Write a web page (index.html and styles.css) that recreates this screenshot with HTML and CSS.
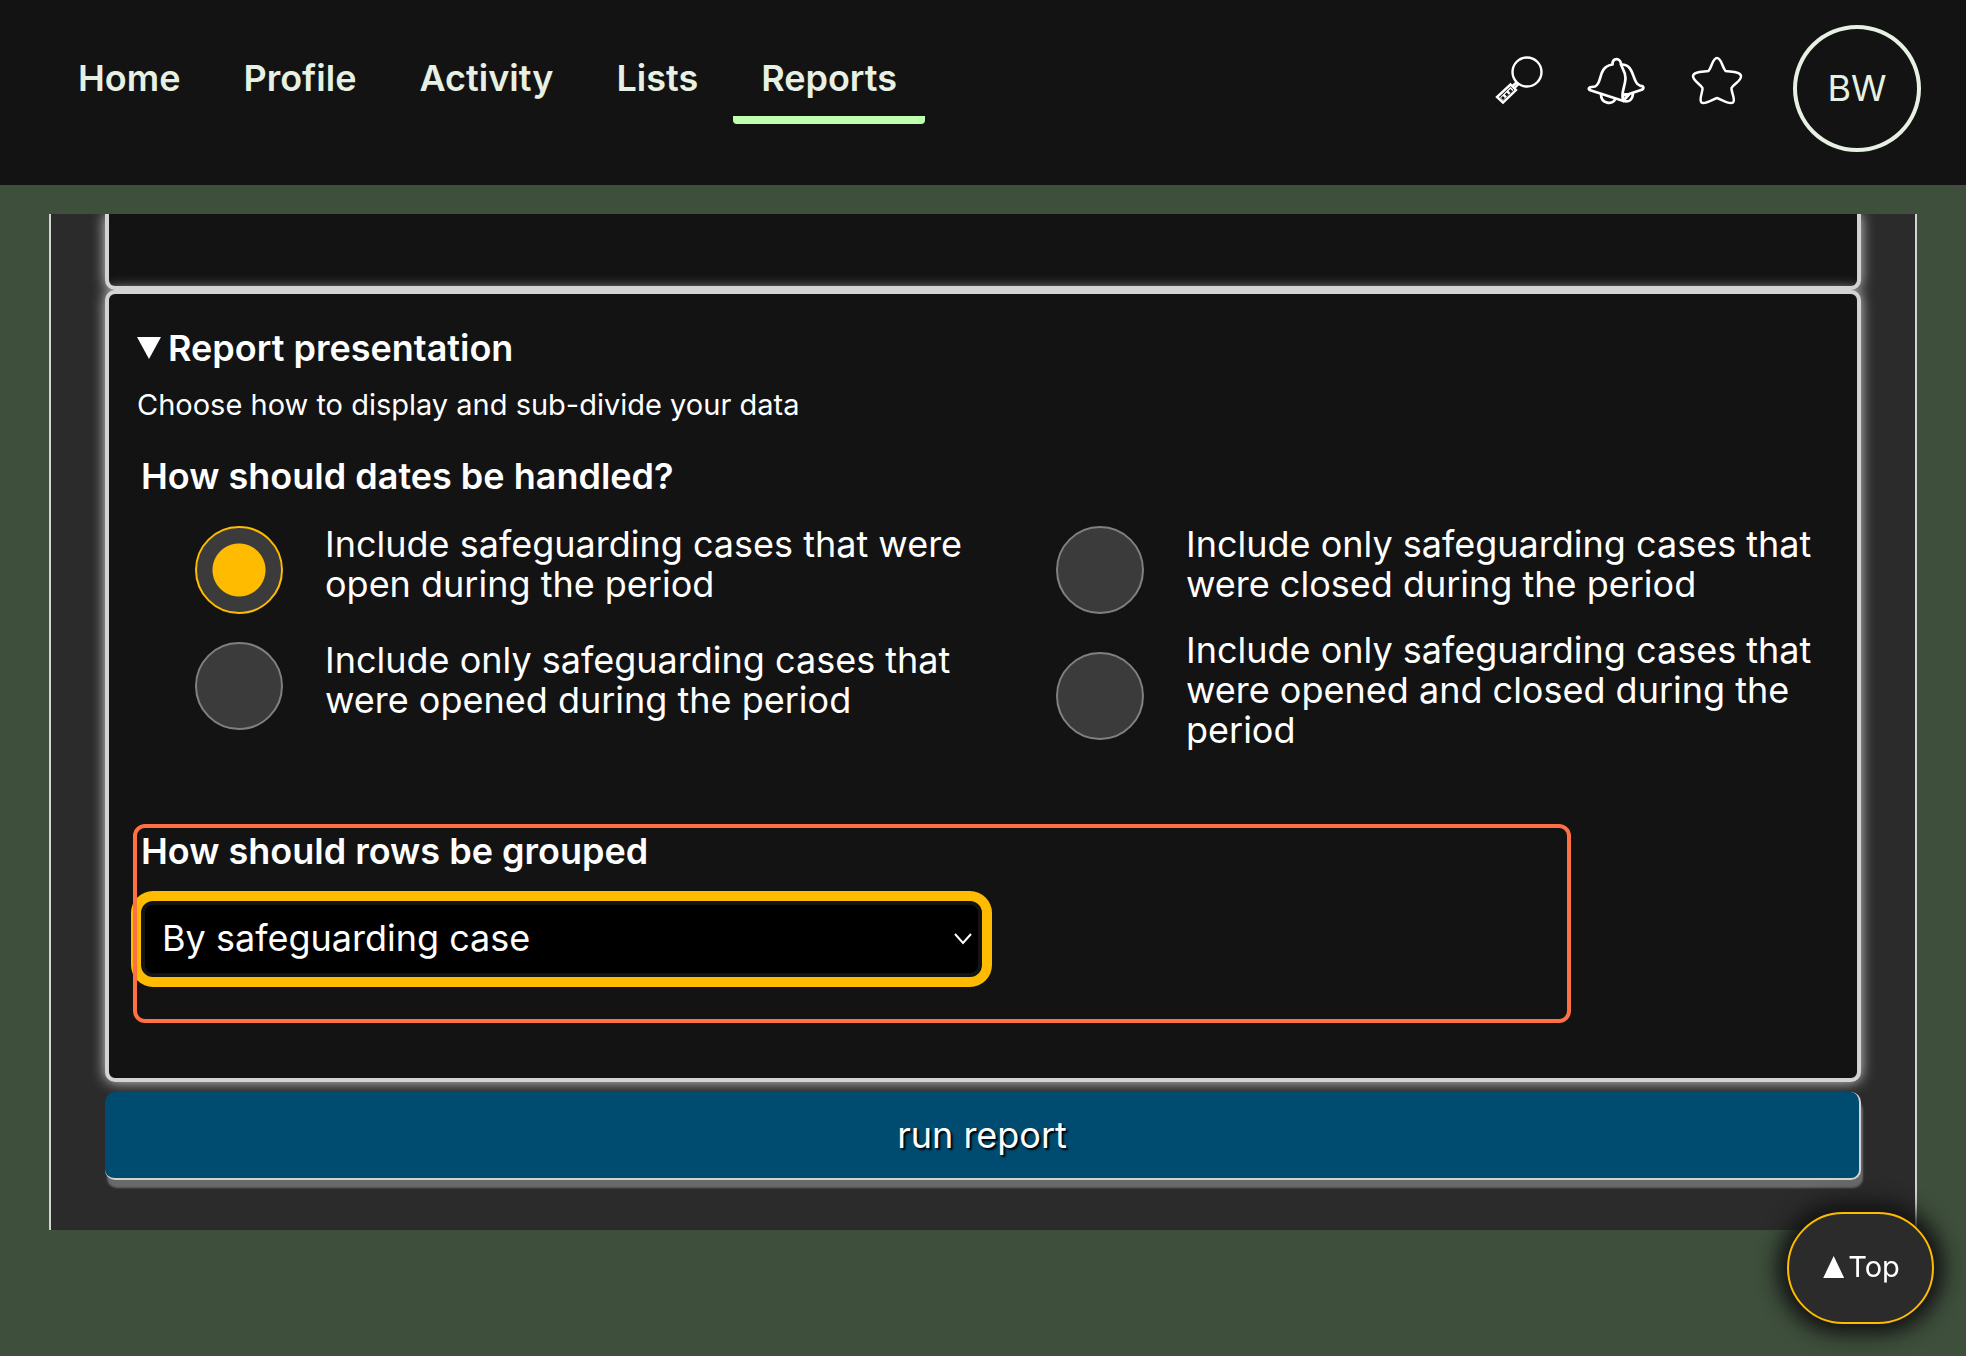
FILE: index.html
```html
<!DOCTYPE html>
<html lang="en">
<head>
<meta charset="utf-8">
<meta name="viewport" content="width=device-width, initial-scale=1">
<title>Reports</title>
<link rel="stylesheet" href="styles.css">
</head>
<body>
<header class="site-header">
  <nav class="main-nav" aria-label="Main">
    <a class="nav-link" href="#home">Home</a>
    <a class="nav-link" href="#profile">Profile</a>
    <a class="nav-link" href="#activity">Activity</a>
    <a class="nav-link" href="#lists">Lists</a>
    <a class="nav-link nav-link-current" href="#reports" aria-current="page">Reports</a>
  </nav>
  <div class="tools">
    <button class="icon-button" type="button" aria-label="Search">
      <svg width="55" height="50" viewBox="0 0 55 50" fill="none" stroke="#fff" stroke-width="2.400">
        <circle cx="37" cy="16" r="14.500"/>
        <path d="M26.500 26.500L22 30.500M28.500 28L24 32.500"/>
        <path d="M20.500 28.500L26 34L13 46.500L7 41Z"/>
        <path d="M20.500 31L23.500 34L13 44.500L10 41.500Z" fill="#fff" stroke="none"/>
        <path d="M19.500 34l2 2M15.800 37.500l2 2M12 41l2 2" stroke="#131313" stroke-width="2.600"/>
      </svg>
    </button>
    <button class="icon-button" type="button" aria-label="Notifications">
      <svg width="60" height="50" viewBox="0 0 60 50" fill="none" stroke="#fff" stroke-width="2.700" stroke-linejoin="round" stroke-linecap="round">
        <path d="M26.500 8.500C26.500 1.500 34.500 1.500 35 8C35.500 12 39.500 15 39.500 22C39.500 31 34 37 37.500 45L5 34.500C2 33.500 2 31.500 5.500 31L9 30.500C17 27 11 11 26.500 8.500Z"/>
        <path d="M35 8.500C48 8 46 23 51.500 28L54.500 30C58 29.500 58.500 33 55 34L43 38C38 39.500 36 36 37.500 45"/>
        <path d="M15 38.500C15 48.500 27 48.500 29 43.500M37.500 45C43 46.500 46.500 44 47 37.500M38 39L43 38.500L38 44"/>
      </svg>
    </button>
    <button class="icon-button" type="button" aria-label="Favourites">
      <svg width="65" height="50" viewBox="0 0 65 50" fill="none" stroke="#fff" stroke-width="2.500" stroke-linejoin="round">
        <path d="M30 2C34.500 2 35 11 38.500 15C44 16 53.500 15.500 54 20C54.500 25 46.500 28 44.500 32C44 36 49 44 46 46.500C42 49 34 43 30 42C26 43 18 49 14.500 46.500C11.500 44 16 36 15.500 32C13.500 28 6 25 6 20C6.500 15.500 16 16 21.500 15C25 11 25.500 2 30 2Z"/>
      </svg>
    </button>
    <button class="avatar" type="button" aria-label="Account BW">BW</button>
  </div>
</header>

<main class="page">
  <form class="report-form">
    <div class="card card-previous"></div>
    <details class="card" open>
      <summary class="card-title"><span class="triangle triangle-down"></span>Report presentation</summary>
      <p class="card-intro">Choose how to display and sub-divide your data</p>

      <fieldset class="dates">
        <legend class="question">How should dates be handled?</legend>
        <div class="options">
          <div class="option-column">
            <label class="option"><input class="radio" type="radio" name="dates" checked><span>Include safeguarding cases that were open during the period</span></label>
            <label class="option"><input class="radio" type="radio" name="dates"><span>Include only safeguarding cases that were opened during the period</span></label>
          </div>
          <div class="option-column">
            <label class="option"><input class="radio" type="radio" name="dates"><span>Include only safeguarding cases that were closed during the period</span></label>
            <label class="option"><input class="radio" type="radio" name="dates"><span>Include only safeguarding cases that were opened and closed during the period</span></label>
          </div>
        </div>
      </fieldset>

      <div class="grouping">
        <label class="question" for="grouping">How should rows be grouped</label>
        <div class="select-wrap">
          <select class="select" id="grouping">
            <option>By safeguarding case</option>
          </select>
          <svg class="chevron" width="20" height="14" viewBox="0 0 20 14" fill="none" stroke="#fff" stroke-width="2" aria-hidden="true"><path d="M2 2L10 11L18 2"/></svg>
        </div>
      </div>
    </details>
    <button class="run-button" type="submit">run report</button>
  </form>
</main>

<a class="to-top" href="#top"><span class="triangle triangle-up"></span>Top</a>
</body>
</html>
```
FILE: styles.css
```css
* {
  box-sizing: border-box;
}

body {
  margin: 0;
  background: #3e4f3c;
  color: #fff;
  font-family: Inter, "Liberation Sans", sans-serif;
  font-size: 36px;
  line-height: 40px;
}

button,
select {
  font: inherit;
  color: inherit;
}

.site-header {
  display: flex;
  justify-content: space-between;
  align-items: flex-start;
  min-height: 185px;
  padding: 25px 45px 0 50px;
  background: #131313;
  color: #e6f1e3;
}

.main-nav {
  display: flex;
  gap: 7px;
  padding-top: 33px;
}

.nav-link {
  padding: 0 28px 18px;
  border-bottom: 8px solid transparent;
  border-radius: 0 0 4px 4px;
  color: inherit;
  font-weight: 600;
  text-decoration: none;
}

.nav-link-current {
  border-bottom-color: #c0ffb0;
}

.tools {
  display: flex;
  gap: 41px;
}

.icon-button {
  height: 50px;
  margin-top: 31px;
  padding: 0;
  border: 0;
  background: none;
}

.icon-button svg {
  display: block;
}

.avatar {
  width: 128px;
  height: 127px;
  padding: 0 0 2px;
  border: 4px solid #e6f1e3;
  border-radius: 50%;
  background: none;
}

.page {
  margin: 29px 49px 0;
  padding: 0 54px 50px;
  overflow: hidden;
  border: solid #d3d3d3;
  border-width: 0 2px;
  background: #2b2b2b;
}

.card {
  padding: 34px 28px 55px;
  border: 4px solid #d3d3d3;
  border-radius: 10px;
  background: #131313;
  box-shadow: 0 0 14px #d3d3d3;
}

.card-previous {
  height: 76px;
  padding: 0;
  border-top: 0;
  border-radius: 0 0 10px 10px;
}

.card-title {
  display: flex;
  align-items: center;
  gap: 7px;
  font-weight: 600;
  list-style: none;
}

.triangle {
  width: 24px;
  height: 22px;
  background: currentColor;
}

.triangle-down {
  clip-path: polygon(0 0, 100% 0, 50% 100%);
}

.triangle-up {
  width: 21px;
  clip-path: polygon(50% 0, 100% 100%, 0 100%);
}

.card-intro {
  margin: 17px 0 31px;
  font-size: 29px;
}

.dates {
  min-width: 0;
  margin: 0;
  padding: 0 0 0 4px;
  border: 0;
}

.question {
  display: block;
  padding: 0;
  font-weight: 600;
}

.options {
  display: grid;
  grid-template-columns: 1fr 1fr;
  gap: 34px;
  padding-top: 18px;
}

.option-column {
  display: flex;
  flex-direction: column;
  gap: 16px;
}

.option {
  display: flex;
  align-items: center;
  gap: 42px;
  padding-left: 54px;
}

.radio {
  flex: none;
  width: 88px;
  height: 88px;
  margin: 12px 0 0;
  border: 2px solid #808080;
  border-radius: 50%;
  background: #3b3b3b;
  appearance: none;
}

.radio:checked {
  border-color: #fb0;
  background: radial-gradient(circle, #fb0 26px, #3b3b3b 27px);
}

.grouping {
  width: 85%;
  margin: 74px 0 0 -4px;
  padding: 7px 4px 46px 8px;
  border-radius: 12px;
  outline: 4px solid #ff7043;
  outline-offset: -4px;
}

.select-wrap {
  display: grid;
  width: 59%;
  margin-top: 30px;
}

.select {
  grid-area: 1 / 1;
  height: 76px;
  padding: 0 40px 2px 17px;
  border: 4px solid #131313;
  border-radius: 12px;
  background: #000;
  box-shadow: 0 0 0 10px #fb0;
  line-height: 52px;
  appearance: none;
}

.chevron {
  grid-area: 1 / 1;
  place-self: center end;
  margin-right: 9px;
  pointer-events: none;
}

.run-button {
  display: block;
  width: 100%;
  height: 88px;
  margin-top: 10px;
  border: solid #d3d3d3;
  border-width: 0 2px 2px 0;
  border-radius: 10px;
  background: #004b70;
  box-shadow: 2px 8px 2px #696969;
  text-shadow: 2px 2px 2px #000;
}

.to-top {
  position: fixed;
  right: 32px;
  bottom: 32px;
  display: flex;
  align-items: center;
  justify-content: center;
  gap: 4px;
  width: 147px;
  height: 112px;
  padding: 0 0 2px 2px;
  border: 2px solid #fb0;
  border-radius: 56px;
  background: #2b2b2b;
  box-shadow: 0 0 20px 10px #131313;
  color: #fff;
  font-size: 29px;
  text-decoration: none;
}
```
